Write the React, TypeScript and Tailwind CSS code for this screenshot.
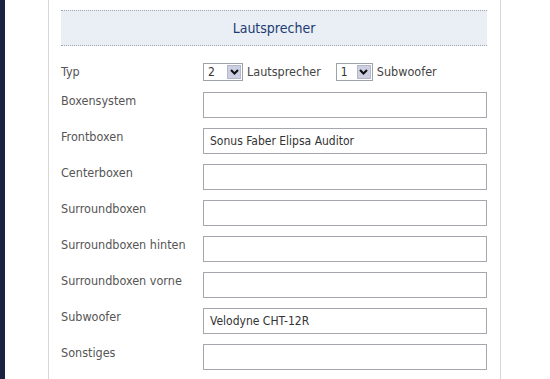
const rows = [
  { label: "Boxensystem", value: "" },
  { label: "Frontboxen", value: "Sonus Faber Elipsa Auditor" },
  { label: "Centerboxen", value: "" },
  { label: "Surroundboxen", value: "" },
  { label: "Surroundboxen hinten", value: "" },
  { label: "Surroundboxen vorne", value: "" },
  { label: "Subwoofer", value: "Velodyne CHT-12R" },
  { label: "Sonstiges", value: "" },
]

function Chevron() {
  return (
    <svg width="9" height="6" viewBox="0 0 9 6">
      <path d="M1 1 L4.5 4.5 L8 1" fill="none" stroke="#111" strokeWidth="2" />
    </svg>
  )
}

function MiniSelect({ value, label, width }: { value: string; label: string; width: string }) {
  return (
    <div className="flex h-[18px] items-center gap-[4px]">
      <div className="flex h-[18px] items-stretch border border-[#9ea3ab] bg-white">
        <span className={`${width} pl-[4px] text-[12px] leading-[16px] text-[#333]`}>{value}</span>
        <span className="m-[1px] flex w-[14px] items-center justify-center border border-[#b4b8cc] bg-[#cdd0e2]">
          <Chevron />
        </span>
      </div>
      <span className="leading-[18px] text-[#444]">{label}</span>
    </div>
  )
}

export default function App() {
  return (
    <div
      className="flex h-[379px] w-[550px] overflow-hidden bg-white text-[12.5px]"
      style={{ fontFamily: '"DejaVu Sans Condensed", "DejaVu Sans", sans-serif' }}
    >
      <div className="w-[5px] bg-[#1b2140]" />
      <div className="w-[43px]" />
      <div className="w-[453px] border-x border-[#d6d6d6] pl-[12px]">
        <div className="mt-[10px] flex h-[36px] w-[426px] items-center justify-center border-y border-dotted border-[#9aa6b4] bg-[#e9eff5] pt-[1px] text-[14px] text-[#1d3a72]">
          Lautsprecher
        </div>
        <div className="mt-[17px] flex h-[18px] w-[426px] items-center">
          <div className="w-[142px] leading-[18px] text-[#555]">Typ</div>
          <div className="flex gap-[15px]">
            <MiniSelect value="2" label="Lautsprecher" width="w-[22px]" />
            <MiniSelect value="1" label="Subwoofer" width="w-[19px]" />
          </div>
        </div>
        <div className="mt-[11px] flex flex-col gap-[10px]">
          {rows.map((row) => (
            <div key={row.label} className="flex w-[426px]">
              <div className="w-[142px] pt-[2px] leading-[14px] text-[#555]">{row.label}</div>
              <div className="h-[26px] w-[284px] border border-[#a4a8ae] bg-white pl-[6px] text-[12px] leading-[24px] text-[#333]">
                {row.value}
              </div>
            </div>
          ))}
        </div>
      </div>
    </div>
  )
}
